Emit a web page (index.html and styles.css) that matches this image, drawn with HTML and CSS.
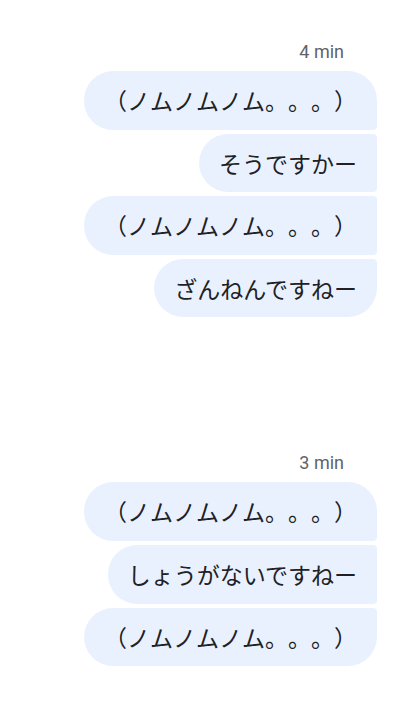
FILE: index.html
```html
<!DOCTYPE html>
<html lang="ja">
<head>
<meta charset="utf-8">
<title>Chat</title>
<link rel="stylesheet" href="styles.css">
</head>
<body>
<main class="thread">
  <section class="group">
    <div class="time">4 min</div>
    <div class="bubble first">（ノムノムノム。。。）</div>
    <div class="bubble middle">そうですかー</div>
    <div class="bubble middle">（ノムノムノム。。。）</div>
    <div class="bubble last">ざんねんですねー</div>
  </section>
  <section class="group">
    <div class="time">3 min</div>
    <div class="bubble first">（ノムノムノム。。。）</div>
    <div class="bubble middle">しょうがないですねー</div>
    <div class="bubble last">（ノムノムノム。。。）</div>
  </section>
</main>
</body>
</html>
```

FILE: styles.css
```css
html, body {
  margin: 0;
  padding: 0;
  background: #ffffff;
}

.thread {
  display: flex;
  flex-direction: column;
  gap: 136px;
  padding: 42px 40px 0 0;
}

.group {
  display: flex;
  flex-direction: column;
  align-items: flex-end;
  gap: 4px;
}

.time {
  font-family: Roboto, "Liberation Sans", sans-serif;
  font-size: 18px;
  line-height: 20px;
  color: #5f6368;
  margin-right: 33px;
  margin-bottom: 5px;
}

.bubble {
  font-family: "Noto Sans CJK JP", "Noto Sans", sans-serif;
  font-size: 23px;
  line-height: 30.6px;
  color: #202124;
  background: #eaf1fe;
  padding: 14px 20px;
  border-radius: 29px;
  white-space: nowrap;
  text-spacing-trim: space-all;
  font-feature-settings: "fwid" 1;
}

.bubble.first {
  border-radius: 29px 29px 4px 29px;
}

.bubble.middle {
  border-radius: 29px 4px 4px 29px;
}

.bubble.last {
  border-radius: 29px 4px 29px 29px;
}
```
